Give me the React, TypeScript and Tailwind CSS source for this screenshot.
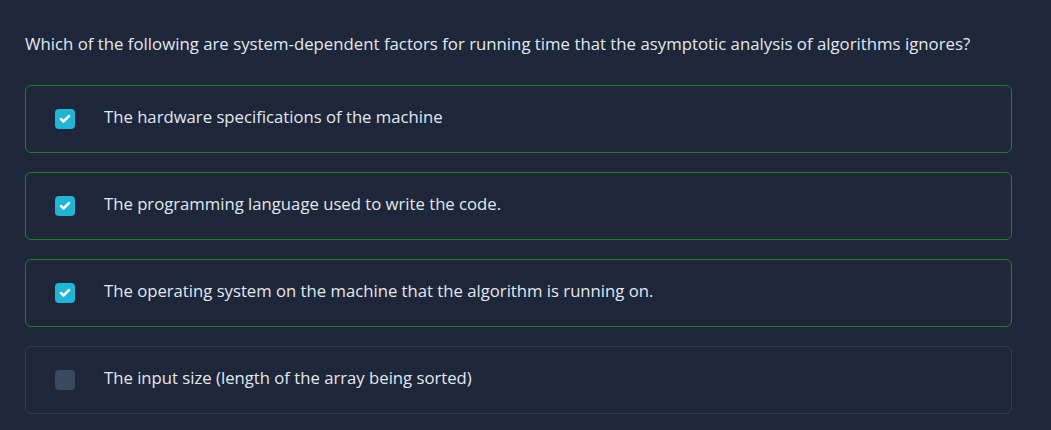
import { Check } from 'lucide-react'

const options = [
  { text: 'The hardware specifications of the machine', checked: true },
  { text: 'The programming language used to write the code.', checked: true },
  { text: 'The operating system on the machine that the algorithm is running on.', checked: true },
  { text: 'The input size (length of the array being sorted)', checked: false },
]

export default function App() {
  return (
    <div
      className="min-h-[430px] w-full bg-[#1e2639] pl-[25px] pr-[39px] pt-[30px] text-[#e2e8f0]"
      style={{ fontFamily: '"Open Sans", "Noto Sans", sans-serif' }}
    >
      <p className="text-[16.8px] leading-[28px]">
        Which of the following are system-dependent factors for running time that the asymptotic analysis of algorithms ignores?
      </p>

      <div className="mt-[27px] flex flex-col gap-[19px]">
        {options.map((o) => (
          <div
            key={o.text}
            className={`flex h-[68px] items-center rounded-[6px] border pl-[29px] ${
              o.checked ? 'border-[#14861f]' : 'border-[#2f3b55]'
            }`}
          >
            <div
              className={`flex h-[20px] w-[20px] items-center justify-center rounded-[4px] ${
                o.checked ? 'bg-[#1fb5d6]' : 'bg-[#3b4862]'
              }`}
            >
              {o.checked && <Check size={12} color="white" strokeWidth={5} />}
            </div>
            <span className="-mt-[5px] ml-[29px] text-[16.7px]">{o.text}</span>
          </div>
        ))}
      </div>
    </div>
  )
}
